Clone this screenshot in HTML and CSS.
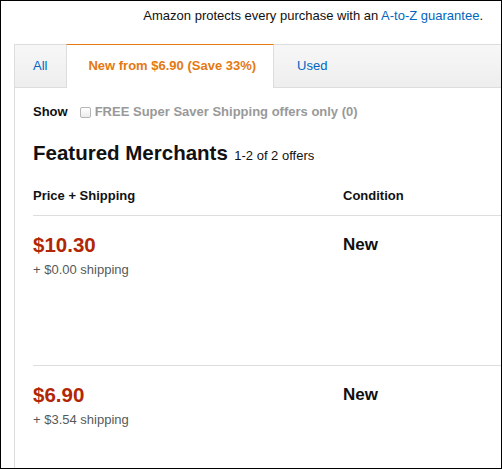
FILE: index.html
```html
<!DOCTYPE html>
<html>
<head>
<meta charset="utf-8">
<link rel="stylesheet" href="styles.css">
</head>
<body>
<div class="frame">
  <div class="guarantee">Amazon protects every purchase with an <a class="link" href="#">A-to-Z guarantee</a>.</div>
  <div class="tabs">
    <div class="tab tab-all">All</div>
    <div class="tab tab-active">New from $6.90 (Save 33%)</div>
    <div class="tab tab-used">Used</div>
  </div>
  <div class="panel">
    <div class="show-row">
      <span class="show-label">Show</span>
      <span class="checkbox"></span>
      <span class="free">FREE Super Saver Shipping offers only (0)</span>
    </div>
    <div class="featured">
      <span class="featured-title">Featured Merchants</span>
      <span class="featured-count">1-2 of 2 offers</span>
    </div>
    <div class="row header">
      <div class="col-price">Price + Shipping</div>
      <div class="col-cond">Condition</div>
    </div>
    <div class="row offer">
      <div class="col-price">
        <div class="price">$10.30</div>
        <div class="ship">+ $0.00 shipping</div>
      </div>
      <div class="col-cond cond">New</div>
    </div>
    <div class="row offer">
      <div class="col-price">
        <div class="price">$6.90</div>
        <div class="ship">+ $3.54 shipping</div>
      </div>
      <div class="col-cond cond">New</div>
    </div>
  </div>
</div>
</body>
</html>
```
FILE: styles.css
```css
html, body {
  margin: 0;
  padding: 0;
  background: #fff;
}
body {
  font-family: "Liberation Sans", Arial, sans-serif;
  color: #111;
}
.frame {
  box-sizing: border-box;
  width: 502px;
  height: 469px;
  border: 1px solid #000;
  overflow: hidden;
  background: #fff;
}
.guarantee {
  height: 43px;
  box-sizing: border-box;
  padding-top: 7px;
  padding-right: 18px;
  text-align: right;
  font-size: 13px;
  line-height: 16px;
  color: #111;
}
.link {
  color: #0066c0;
  text-decoration: none;
}
.tabs {
  display: flex;
  margin-left: 13px;
  width: 600px;
  height: 44px;
  box-sizing: border-box;
  border-top: 1px solid #ddd;
  border-left: 1px solid #ddd;
  border-bottom: 1px solid #ddd;
  background: linear-gradient(#f7f7f7, #eeeeee);
}
.tab {
  font-size: 13px;
  line-height: 42px;
  color: #0066c0;
  white-space: nowrap;
}
.tab-all {
  padding: 0 19px 0 18px;
}
.tab-active {
  margin-top: -1px;
  height: 44px;
  box-sizing: border-box;
  border-top: 1px solid #e47911;
  border-left: 1px solid #ddd;
  border-right: 1px solid #ddd;
  background: #fff;
  padding: 0 17px 0 21px;
  font-weight: bold;
  color: #e47911;
}
.tab-used {
  padding: 0 20px 0 23px;
}
.panel {
  margin-left: 13px;
  border-left: 1px solid #ddd;
  padding-left: 18px;
  padding-top: 16px;
  height: 400px;
}
.show-row {
  display: flex;
  align-items: center;
  font-size: 13px;
  line-height: 16px;
  font-weight: bold;
}
.show-label {
  color: #111;
}
.checkbox {
  width: 9px;
  height: 9px;
  border: 1px solid #b5b5b5;
  border-radius: 2px;
  background: linear-gradient(#ffffff, #ececec);
  margin-left: 12px;
  margin-right: 4px;
}
.free {
  color: #999;
}
.featured {
  margin-top: 21px;
  line-height: 24px;
  white-space: nowrap;
}
.featured-title {
  font-size: 20.5px;
  font-weight: bold;
  color: #111;
}
.featured-count {
  font-size: 13px;
  color: #111;
  margin-left: 2px;
}
.row {
  display: grid;
  grid-template-columns: 310px 1fr;
  width: 600px;
  border-bottom: 1px solid #ddd;
}
.header {
  margin-top: 20px;
  padding-bottom: 11px;
  font-size: 13px;
  line-height: 16px;
  font-weight: bold;
  color: #111;
}
.offer {
  height: 150px;
  box-sizing: border-box;
  padding-top: 17px;
}
.price {
  font-size: 20.5px;
  line-height: 24px;
  font-weight: bold;
  color: #b12704;
}
.ship {
  margin-top: 5px;
  font-size: 13px;
  line-height: 16px;
  color: #565959;
}
.cond {
  font-size: 17px;
  line-height: 24px;
  font-weight: bold;
  color: #111;
}
```
